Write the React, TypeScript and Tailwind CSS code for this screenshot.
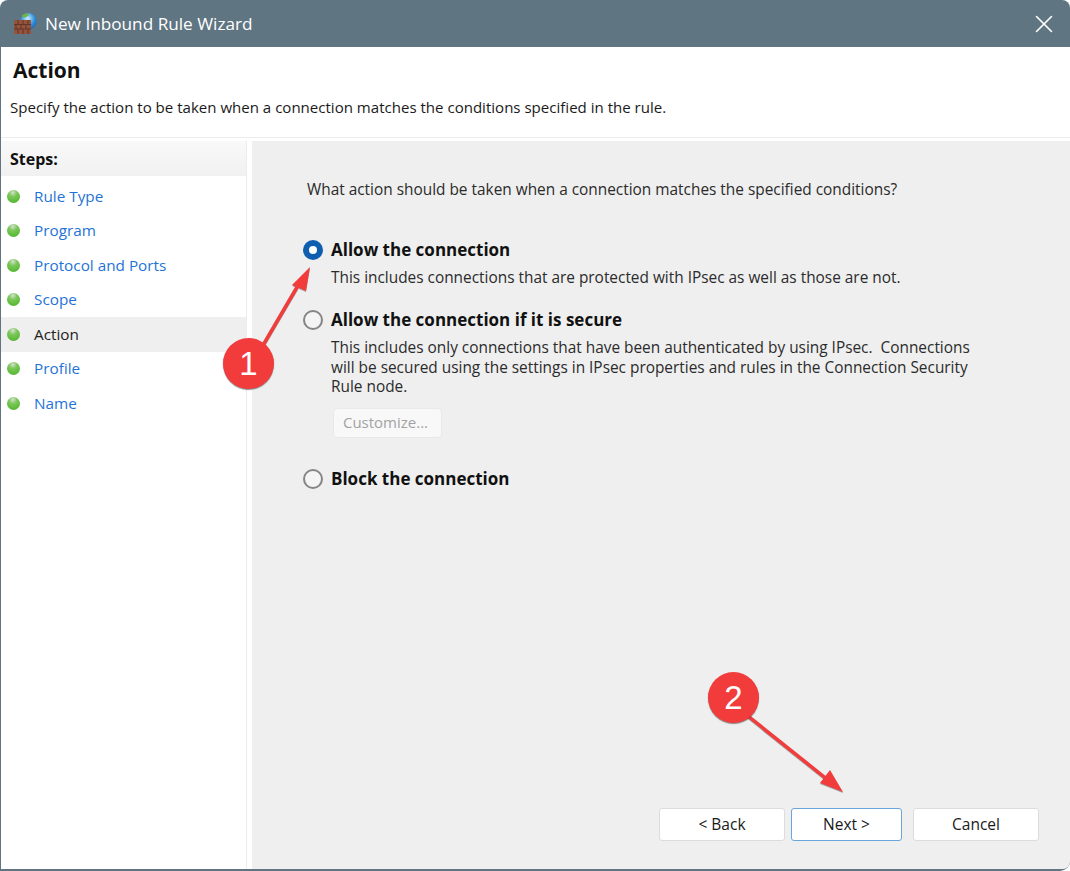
import { X } from "lucide-react";

const steps = ["Rule Type", "Program", "Protocol and Ports", "Scope", "Action", "Profile", "Name"];

const font = "font-['Open_Sans','Noto_Sans',sans-serif]";

function WallIcon() {
  return (
    <svg width="23" height="21" viewBox="0 0 23 21">
      <defs>
        <radialGradient id="globe" cx="0.45" cy="0.35" r="0.7">
          <stop offset="0" stopColor="#cfeefc" />
          <stop offset="0.6" stopColor="#2f8fdc" />
          <stop offset="1" stopColor="#1c5fae" />
        </radialGradient>
      </defs>
      <circle cx="14.500" cy="8.200" r="8.200" fill="url(#globe)" />
      <path d="M8 2.500c2-2 5-2.500 7-1.500c-1 2-3 4-6 3.500z" fill="#6ab544" />
      <rect x="0" y="7" width="17" height="14" fill="#94533b" />
      <path d="M0 11.500h17M0 16h17M4 7v4.500M9 7v4.500M14 7v4.500M2 11.500v4.500M7 11.500v4.500M12 11.500v4.500M4 16v5M9 16v5M14 16v5" stroke="#63362a" strokeWidth="1" fill="none" />
    </svg>
  );
}

function StepDot() {
  return (
    <span className="h-[13px] w-[13px] shrink-0 rounded-full bg-[radial-gradient(circle_at_45%_20%,#d8e0d4_0%,#7cc85a_32%,#45b020_100%)]" />
  );
}

function Radio({ checked }: { checked?: boolean }) {
  if (checked) {
    return (
      <span className="flex h-5 w-5 shrink-0 items-center justify-center rounded-full bg-[#0f5fb0]">
        <span className="h-2 w-2 rounded-full bg-white" />
      </span>
    );
  }
  return <span className="h-5 w-5 shrink-0 rounded-full border-2 border-[#858585] bg-[#f4f4f4]" />;
}

function Button({ label, className }: { label: string; className: string }) {
  return (
    <div className={`flex h-[33px] items-center justify-center rounded-[3px] border bg-white text-[15.500px] text-[#1a1a1a] ${className}`}>
      {label}
    </div>
  );
}

function Badge({ n, className }: { n: string; className: string }) {
  return (
    <div className={`absolute flex h-[51px] w-[51px] items-center justify-center rounded-full bg-[#f23c3c] font-['Liberation_Sans',sans-serif] text-[33px] leading-none text-white shadow-[0_1px_1px_rgba(60,60,60,0.6)] ${className}`}>
      {n}
    </div>
  );
}

export default function App() {
  return (
    <div className={`relative flex h-[871px] w-[1070px] flex-col overflow-hidden rounded-t-[8px] rounded-br-[10px] bg-[#5f7582] ${font}`}>
      {/* Title bar */}
      <div className="flex h-[47px] shrink-0 items-center pl-[14px] pr-[11px]">
        <WallIcon />
        <span className="ml-[8px] text-[17.200px] text-white">New Inbound Rule Wizard</span>
        <X className="ml-auto h-[30px] w-[30px] text-white" strokeWidth={1.3} absoluteStrokeWidth />
      </div>

      <div className="ml-px mb-[2px] flex min-h-0 flex-1 flex-col rounded-br-[8px] bg-white">
        {/* Header */}
        <div className="h-[91px] shrink-0 border-b border-[#ececec] pl-[12px] pt-[8px]">
          <h1 className="text-[21px] font-bold leading-[30px] text-[#111]">Action</h1>
          <p className="-ml-[3px] mt-[11px] text-[15.050px] leading-[22px] text-[#1a1a1a]">
            Specify the action to be taken when a connection matches the conditions specified in the rule.
          </p>
        </div>

        <div className="flex min-h-0 flex-1 pt-[3px]">
          {/* Steps */}
          <div className="w-[246px] shrink-0 border-r border-[#ececec]">
            <div className="flex h-[35px] items-center bg-[linear-gradient(#f9f9f9,#f1f1f1)] pl-[9px] text-[16px] font-bold text-[#111]">
              Steps:
            </div>
            <div className="pt-[3px]">
              {steps.map((step) => (
                <div
                  key={step}
                  className={`flex h-[34.500px] items-center gap-[14px] pl-[6px] text-[15.300px] ${
                    step === "Action" ? "bg-[#efefef] text-[#222]" : "text-[#1f73d6]"
                  }`}
                >
                  <StepDot />
                  {step}
                </div>
              ))}
            </div>
          </div>

          {/* Main panel */}
          <div className="ml-[5px] flex min-w-0 flex-1 flex-col rounded-br-[8px] bg-[#efefef] pl-[51px] pr-[30px] pt-[38px]">
            <p className="ml-[4px] text-[15.400px] leading-[22px] text-[#2b2b2b]">
              What action should be taken when a connection matches the specified conditions?
            </p>

            <div className="mt-[38px] flex items-center gap-[8px]">
              <Radio checked />
              <span className="text-[17px] font-bold leading-[22px] text-[#111]">Allow the connection</span>
            </div>
            <p className="ml-[28px] mt-[7px] text-[15.400px] leading-[20px] text-[#2b2b2b]">
              This includes connections that are protected with IPsec as well as those are not.
            </p>

            <div className="mt-[21px] flex items-center gap-[8px]">
              <Radio />
              <span className="text-[17px] font-bold leading-[22px] text-[#111]">Allow the connection if it is secure</span>
            </div>
            <p className="ml-[28px] mt-[7px] w-[650px] text-[15.400px] leading-[19.500px] text-[#2b2b2b]">
              This includes only connections that have been authenticated by using IPsec.&nbsp; Connections will be secured using the settings in IPsec properties and rules in the Connection Security Rule node.
            </p>
            <div className="ml-[30px] mt-[11px] flex h-[30px] w-[109px] items-center justify-center rounded-[4px] border border-[#e9e9e9] bg-[#f8f8f8] pr-[4px] text-[15px] text-[#a3a3a3]">
              Customize...
            </div>

            <div className="mt-[30px] flex items-center gap-[8px]">
              <Radio />
              <span className="text-[17px] font-bold leading-[22px] text-[#111]">Block the connection</span>
            </div>

            {/* Buttons */}
            <div className="mt-auto mb-[28px] mr-px flex justify-end">
              <Button label="< Back" className="w-[126px] border-[#dcdcdc]" />
              <Button label="Next >" className="ml-[6px] w-[111px] border-[#6aa5dc]" />
              <Button label="Cancel" className="ml-[11px] w-[126px] border-[#dcdcdc]" />
            </div>
          </div>
        </div>
      </div>

      {/* Annotations over the window */}
      <svg className="pointer-events-none absolute inset-0 drop-shadow-[0_1px_0_rgba(80,80,80,0.5)]" width="1070" height="871" viewBox="0 0 1070 871">
        <path d="M262 347L300 282" stroke="#f23c3c" strokeWidth="3.500" fill="none" />
        <path d="M310 267L292 285L306 291z" fill="#f23c3c" />
        <path d="M748 716L828 780" stroke="#f23c3c" strokeWidth="3.500" fill="none" />
        <path d="M843 792L820 783L830 770z" fill="#f23c3c" />
      </svg>
      <Badge n="1" className="left-[223px] top-[338px]" />
      <Badge n="2" className="left-[708px] top-[672px]" />
    </div>
  );
}
